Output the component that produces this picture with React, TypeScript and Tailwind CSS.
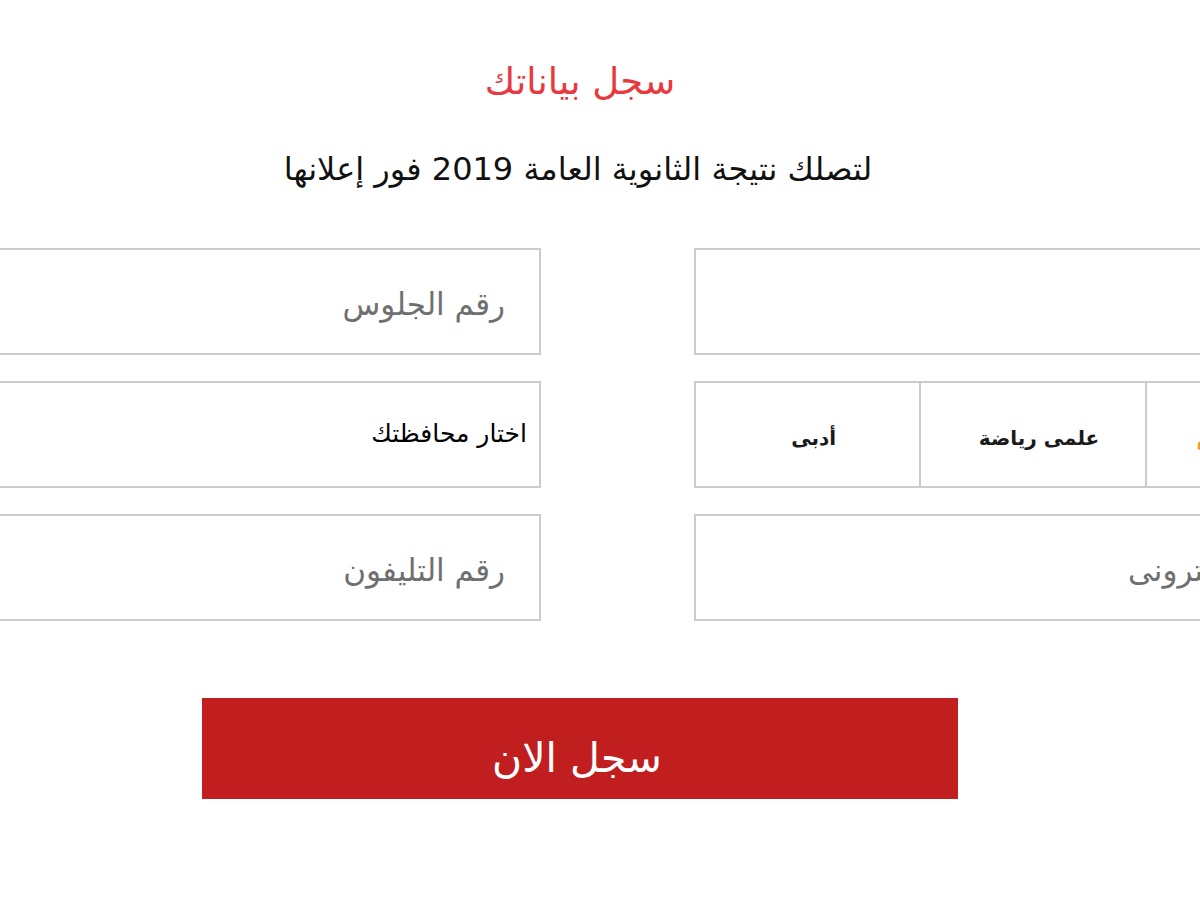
import React from 'react'

const font = { fontFamily: '"DejaVu Sans", "Noto Sans", sans-serif' }

function Field({ placeholder, className = '' }: { placeholder?: string; className?: string }) {
  return (
    <div
      dir="rtl"
      className={`h-[107px] border-2 border-[#cbcbcb] bg-white flex items-center pr-[34px] pt-[6px] text-[31px] text-[#6f6f6f] ${className}`}
    >
      {placeholder}
    </div>
  )
}

export default function App() {
  const sections = ['علمى علوم', 'علمى رياضة', 'أدبى']

  return (
    <div className="w-[1200px] h-[900px] overflow-hidden bg-white" style={font}>
      <div className="flex flex-col items-center pt-[56px]">
        <h1 className="text-[37px] leading-[52px] text-[#e8393f] pr-[40px]" dir="rtl">
          سجل بياناتك
        </h1>
        <p className="mt-[40px] text-[32px] leading-[42px] text-[#111] pr-[44px]" dir="rtl">
          لتصلك نتيجة الثانوية العامة 2019 فور إعلانها
        </p>
      </div>

      <div className="mt-[58px] ml-[-137px] flex gap-[153px] w-[1509px]">
        {/* left column */}
        <div className="w-[678px] flex flex-col gap-[26px]">
          <Field placeholder="رقم الجلوس" />
          <div
            dir="rtl"
            className="h-[107px] border-2 border-[#cbcbcb] bg-white flex items-start pt-[32px] pr-[12px] text-[25px] text-black"
          >
            اختار محافظتك
          </div>
          <Field placeholder="رقم التليفون" />
        </div>

        {/* right column */}
        <div className="w-[678px] flex flex-col gap-[26px]">
          <Field />
          <div dir="rtl" className="h-[107px] flex border-2 border-[#cbcbcb] bg-white">
            {sections.map((s, i) => (
              <div
                key={s}
                className={`flex-1 flex items-center justify-center pt-[6px] text-[20px] font-bold ${
                  i < 2 ? 'border-l-2 border-[#cbcbcb]' : ''
                } ${i === 0 ? 'text-[#f0a02a] pr-[12px]' : 'text-[#1a1a1a] pl-[12px]'}`}
              >
                {s}
              </div>
            ))}
          </div>
          <Field placeholder="البريد الالكترونى" />
        </div>
      </div>

      <div className="mt-[77px] ml-[202px] w-[756px] h-[101px] bg-[#c01e1f] flex items-center justify-center">
        <span dir="rtl" className="text-[41px] text-white pr-[6px] pt-[20px]">
          سجل الان
        </span>
      </div>
    </div>
  )
}
